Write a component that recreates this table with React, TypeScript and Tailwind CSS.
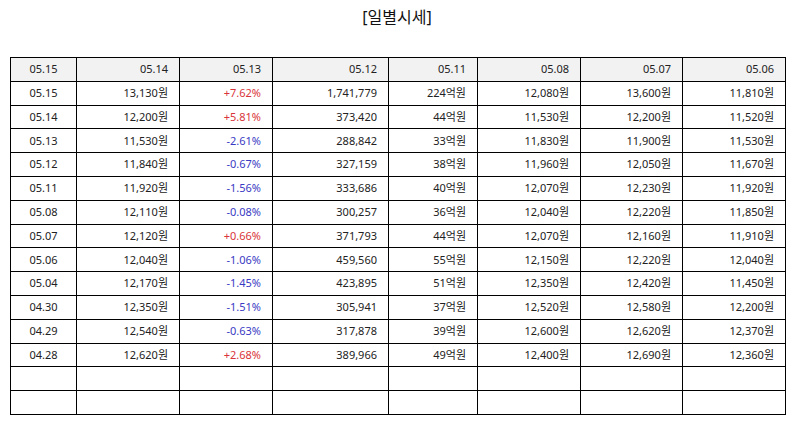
const header = ["05.15", "05.14", "05.13", "05.12", "05.11", "05.08", "05.07", "05.06"];

const rows: string[][] = [
  ["05.15", "13,130원", "+7.62%", "1,741,779", "224억원", "12,080원", "13,600원", "11,810원"],
  ["05.14", "12,200원", "+5.81%", "373,420", "44억원", "11,530원", "12,200원", "11,520원"],
  ["05.13", "11,530원", "-2.61%", "288,842", "33억원", "11,830원", "11,900원", "11,530원"],
  ["05.12", "11,840원", "-0.67%", "327,159", "38억원", "11,960원", "12,050원", "11,670원"],
  ["05.11", "11,920원", "-1.56%", "333,686", "40억원", "12,070원", "12,230원", "11,920원"],
  ["05.08", "12,110원", "-0.08%", "300,257", "36억원", "12,040원", "12,220원", "11,850원"],
  ["05.07", "12,120원", "+0.66%", "371,793", "44억원", "12,070원", "12,160원", "11,910원"],
  ["05.06", "12,040원", "-1.06%", "459,560", "55억원", "12,150원", "12,220원", "12,040원"],
  ["05.04", "12,170원", "-1.45%", "423,895", "51억원", "12,350원", "12,420원", "11,450원"],
  ["04.30", "12,350원", "-1.51%", "305,941", "37억원", "12,520원", "12,580원", "12,200원"],
  ["04.29", "12,540원", "-0.63%", "317,878", "39억원", "12,600원", "12,620원", "12,370원"],
  ["04.28", "12,620원", "+2.68%", "389,966", "49억원", "12,400원", "12,690원", "12,360원"],
  ["", "", "", "", "", "", "", ""],
  ["", "", "", "", "", "", "", ""],
];

const widths = ["w-[66px]", "w-[103px]", "w-[93px]", "w-[116px]", "w-[89px]", "w-[103px]", "w-[102px]", "w-[103px]"];

const cellClass = (i: number) =>
  i === 0 ? "border border-black text-center px-2" : "border border-black text-right pr-[11px] pl-2";

const changeColor = (v: string) => (v.startsWith("+") ? "text-[#d9343a]" : v.startsWith("-") ? "text-[#3a3ac4]" : "");

export default function App() {
  return (
    <div
      className="w-[794px] h-[425px] bg-white text-[#222] overflow-hidden"
      style={{ fontFamily: '"Noto Sans", "Noto Sans CJK KR", sans-serif' }}
    >
      <h1 className="text-center text-[16px] leading-[20px] pt-[7px] text-[#111]">[일별시세]</h1>
      <div className="pl-[10px] pt-[30px]">
        <table className="border-collapse border border-black text-[11px] table-fixed w-[775px]">
          <colgroup>
            {widths.map((w, i) => (
              <col key={i} className={w} />
            ))}
          </colgroup>
          <thead>
            <tr className="h-[23.8px] bg-[#f2f2f2]">
              {header.map((h, i) => (
                <th key={i} className={`${cellClass(i)} font-normal`}>
                  {h}
                </th>
              ))}
            </tr>
          </thead>
          <tbody>
            {rows.map((r, ri) => (
              <tr key={ri} className="h-[23.8px]">
                {r.map((c, ci) => (
                  <td key={ci} className={`${cellClass(ci)} ${ci === 2 ? changeColor(c) : ""}`}>
                    {c}
                  </td>
                ))}
              </tr>
            ))}
          </tbody>
        </table>
      </div>
    </div>
  );
}
